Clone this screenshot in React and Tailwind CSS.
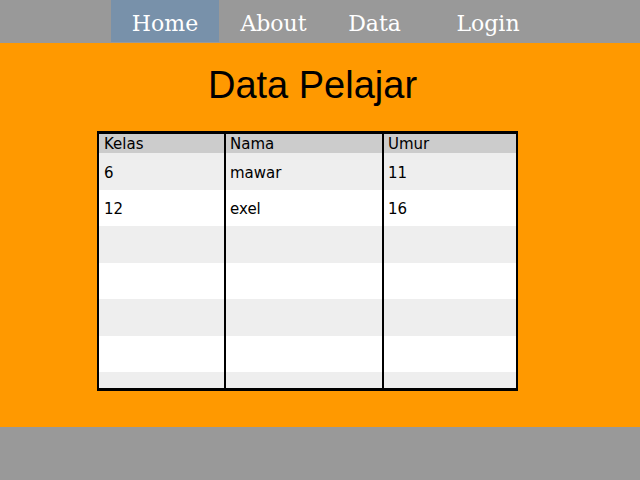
import React from "react";

const rows = [
  { kelas: "6", nama: "mawar", umur: "11" },
  { kelas: "12", nama: "exel", umur: "16" },
  { kelas: "", nama: "", umur: "" },
  { kelas: "", nama: "", umur: "" },
  { kelas: "", nama: "", umur: "" },
  { kelas: "", nama: "", umur: "" },
];

const navItems = [
  { label: "Home", active: true, cls: "w-[108px]" },
  { label: "About", cls: "w-[109px]" },
  { label: "Data", cls: "w-[93px]" },
  { label: "Login", cls: "w-[104px] ml-[15px]" },
];

// widths include the 2px divider on the left of Nama / Umur
const columns = [
  { key: "kelas", title: "Kelas", cls: "w-[125px]", pad: "pl-[5px]" },
  { key: "nama", title: "Nama", cls: "w-[158px] border-l-2 border-black", pad: "pl-[4px]" },
  { key: "umur", title: "Umur", cls: "w-[134px] border-l-2 border-black", pad: "pl-[4px]" },
];

const App = () => {
  return (
    <div className="w-[640px] h-[480px] flex flex-col bg-[#999999]">
      {/* Nav */}
      <nav className="h-[43px] flex pl-[111px] font-['DejaVu_Serif',serif] text-white text-[22px]">
        {navItems.map((item) => (
          <div
            key={item.label}
            className={`${item.cls} h-[42px] flex items-center justify-center pt-[5px] ${
              item.active ? "bg-[#7891aa]" : ""
            }`}
          >
            {item.label}
          </div>
        ))}
      </nav>

      {/* Content */}
      <main className="h-[384px] bg-[#ff9900] flex flex-col items-center">
        <h1 className="mt-[17px] ml-[-15px] h-[50px] leading-[50px] text-[38px] text-black font-['Liberation_Sans',sans-serif]">
          Data Pelajar
        </h1>

        <div className="mt-[21px] ml-[-25px] w-[421px] h-[260px] border-t-[3px] border-x-2 border-b-[3px] border-black flex overflow-hidden font-['DejaVu_Sans',sans-serif] text-[15px] text-black">
          {columns.map((col) => (
            <div key={col.key} className={`${col.cls} flex-none flex flex-col`}>
              <div className={`h-[19px] bg-[#cccccc] leading-[19px] pt-[1px] ${col.pad}`}>
                {col.title}
              </div>
              {rows.map((r, i) => (
                <div
                  key={i}
                  className={`h-[36.5px] flex-none flex items-center pt-[3px] ${col.pad} ${
                    i % 2 === 0 ? "bg-[#eeeeee]" : "bg-white"
                  }`}
                >
                  {r[col.key]}
                </div>
              ))}
              <div className="flex-1 bg-[#eeeeee]" />
            </div>
          ))}
        </div>
      </main>

      <footer className="flex-1 bg-[#999999]" />
    </div>
  );
};

export default App;
